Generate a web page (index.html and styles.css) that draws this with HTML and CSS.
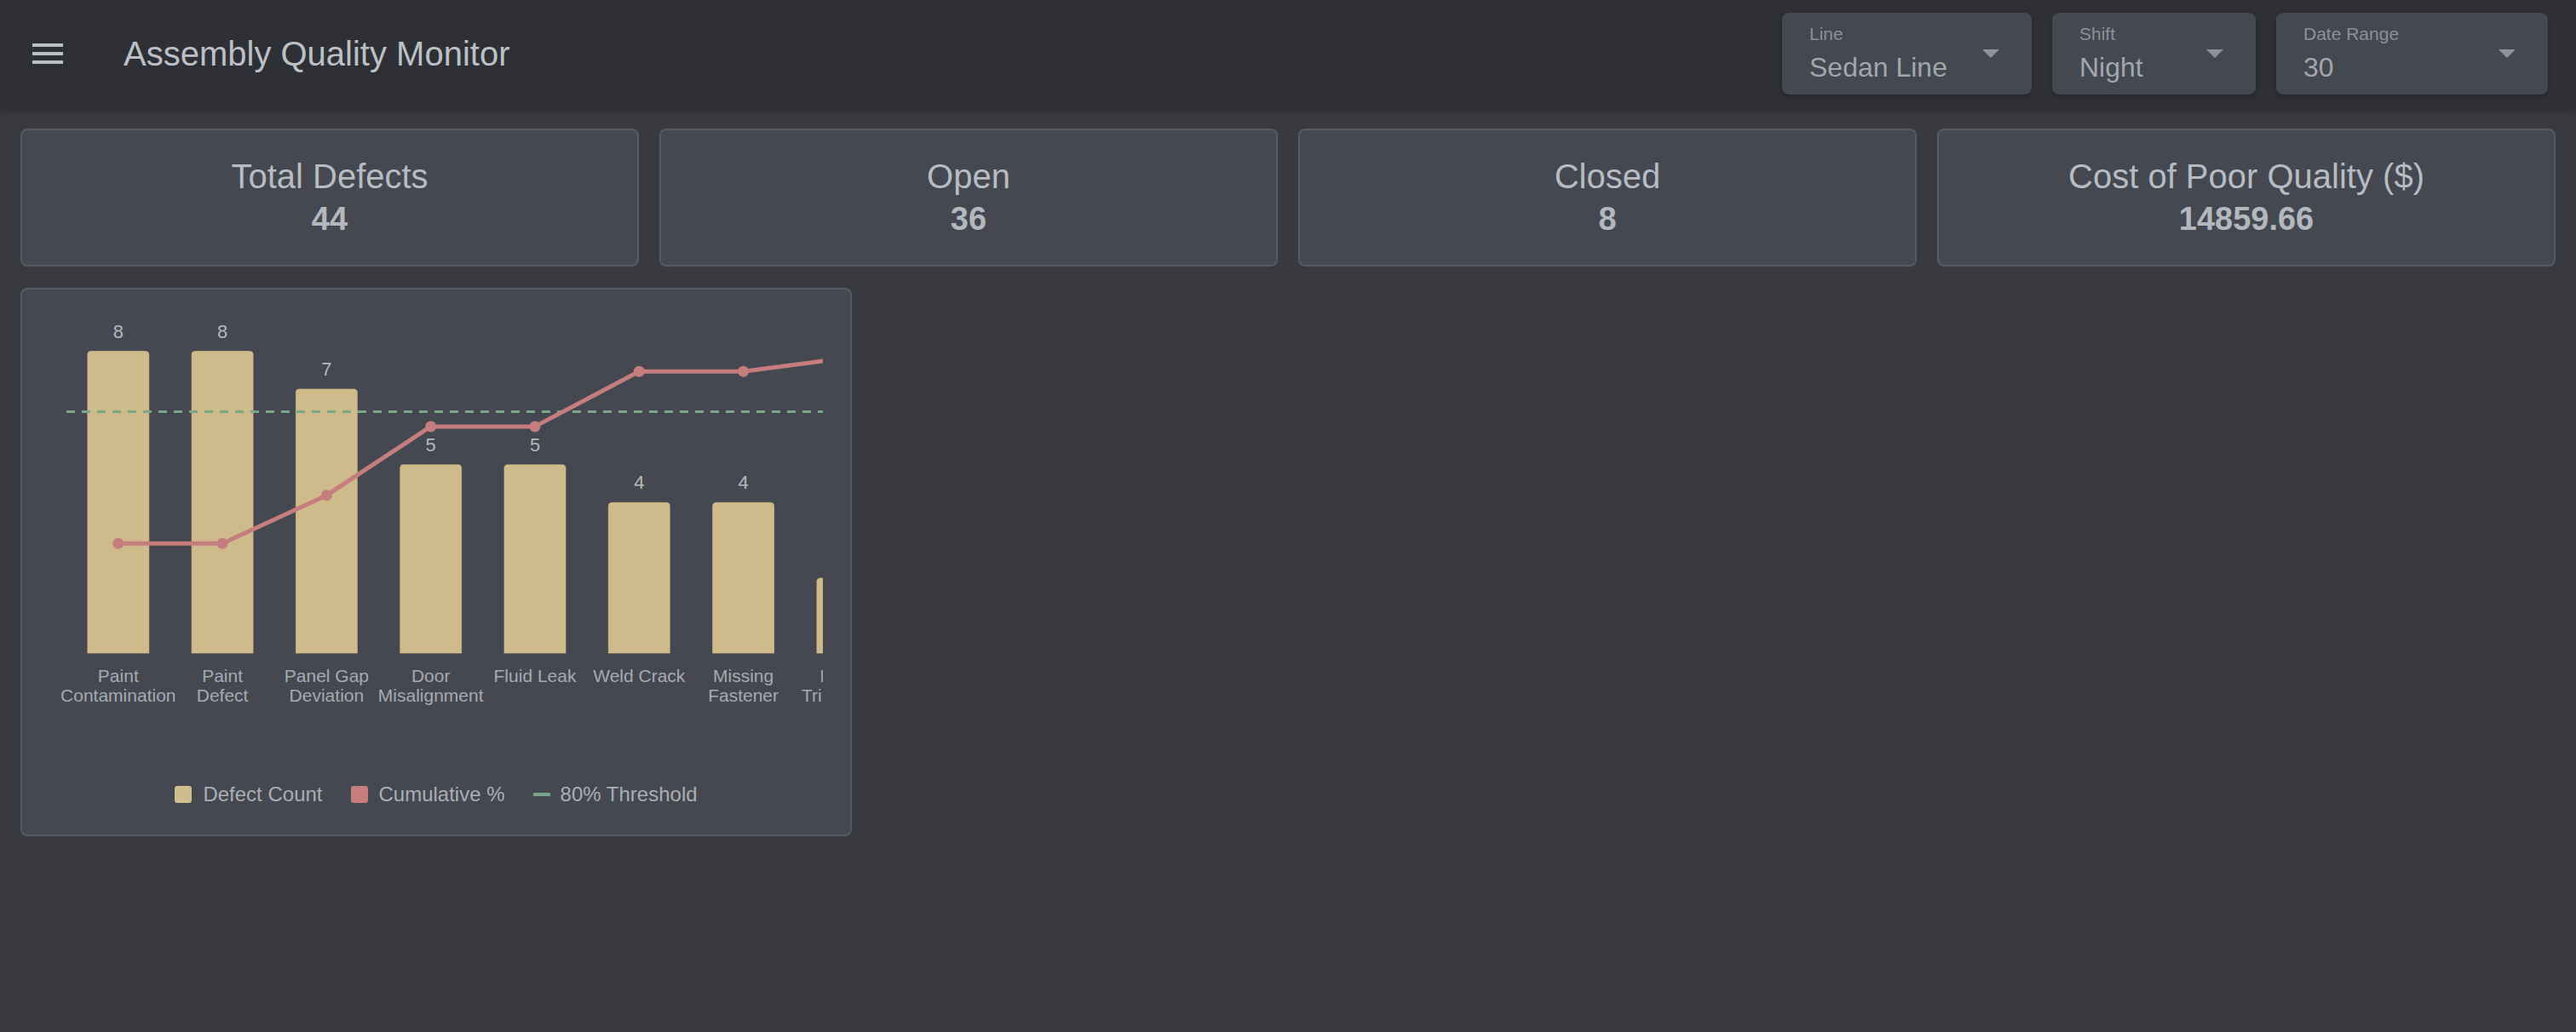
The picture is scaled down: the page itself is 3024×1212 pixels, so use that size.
FILE: index.html
```html
<!DOCTYPE html>
<html lang="en">
<head>
<meta charset="utf-8">
<title>Assembly Quality Monitor</title>
<link rel="stylesheet" href="styles.css">
</head>
<body>
<header class="appbar">
  <svg class="menu-icon" viewBox="0 0 24 24" aria-hidden="true"><path d="M3 18h18v-2H3zm0-5h18v-2H3zm0-7v2h18V6z"/></svg>
  <h1 class="app-title">Assembly Quality Monitor</h1>
  <div class="spacer"></div>
  <div class="filters">
    <div class="select select-line">
      <div class="select-text">
        <div class="select-label">Line</div>
        <div class="select-value">Sedan Line</div>
      </div>
      <svg class="select-arrow" viewBox="7 10 10 5" aria-hidden="true"><path d="M7 10l5 5 5-5z"/></svg>
    </div>
    <div class="select select-shift">
      <div class="select-text">
        <div class="select-label">Shift</div>
        <div class="select-value">Night</div>
      </div>
      <svg class="select-arrow" viewBox="7 10 10 5" aria-hidden="true"><path d="M7 10l5 5 5-5z"/></svg>
    </div>
    <div class="select select-range">
      <div class="select-text">
        <div class="select-label">Date Range</div>
        <div class="select-value">30</div>
      </div>
      <svg class="select-arrow" viewBox="7 10 10 5" aria-hidden="true"><path d="M7 10l5 5 5-5z"/></svg>
    </div>
  </div>
</header>

<main class="content">
  <section class="kpis">
    <div class="card kpi"><div class="kpi-title">Total Defects</div><div class="kpi-value">44</div></div>
    <div class="card kpi"><div class="kpi-title">Open</div><div class="kpi-value">36</div></div>
    <div class="card kpi"><div class="kpi-title">Closed</div><div class="kpi-value">8</div></div>
    <div class="card kpi"><div class="kpi-title">Cost of Poor Quality ($)</div><div class="kpi-value">14859.66</div></div>
  </section>

  <section class="charts">
    <div class="card chart-card">
      <svg class="pareto" width="910" height="549" viewBox="0 0 910 549">
        <g class="bars">
          <path d="M46.3 397.5V47Q46.3 42 51.3 42H114.3Q119.3 42 119.3 47V397.5Z"/>
          <path d="M168.6 397.5V47Q168.6 42 173.6 42H236.6Q241.6 42 241.6 47V397.5Z"/>
          <path d="M290.9 397.5V91.4Q290.9 86.4 295.9 86.4H358.9Q363.9 86.4 363.9 91.4V397.5Z"/>
          <path d="M413.2 397.5V180.3Q413.2 175.3 418.2 175.3H481.2Q486.2 175.3 486.2 180.3V397.5Z"/>
          <path d="M535.5 397.5V180.3Q535.5 175.3 540.5 175.3H603.5Q608.5 175.3 608.5 180.3V397.5Z"/>
          <path d="M657.8 397.5V224.7Q657.8 219.7 662.8 219.7H725.8Q730.8 219.7 730.8 224.7V397.5Z"/>
          <path d="M780.1 397.5V224.7Q780.1 219.7 785.1 219.7H848.1Q853.1 219.7 853.1 224.7V397.5Z"/>
          <path d="M902.4 397.5V313.6Q902.4 308.6 907.4 308.6H970.4Q975.4 308.6 975.4 313.6V397.5Z"/>
        </g>
        <g class="bar-values">
          <text x="82.8" y="26.7">8</text>
          <text x="205.1" y="26.7">8</text>
          <text x="327.4" y="71.1">7</text>
          <text x="449.7" y="160">5</text>
          <text x="572" y="160">5</text>
          <text x="694.3" y="204.4">4</text>
          <text x="816.6" y="204.4">4</text>
        </g>
        <g class="ticks">
          <text x="82.8" y="430.7">Paint</text>
          <text x="82.8" y="454">Contamination</text>
          <text x="205.1" y="430.7">Paint</text>
          <text x="205.1" y="454">Defect</text>
          <text x="327.4" y="430.7">Panel Gap</text>
          <text x="327.4" y="454">Deviation</text>
          <text x="449.7" y="430.7">Door</text>
          <text x="449.7" y="454">Misalignment</text>
          <text x="572" y="430.7">Fluid Leak</text>
          <text x="694.3" y="430.7">Weld Crack</text>
          <text x="816.6" y="430.7">Missing</text>
          <text x="816.6" y="454">Fastener</text>
          <text x="938.9" y="430.7">Interior</text>
          <text x="938.9" y="454">Trim Defect</text>
        </g>
        <line class="threshold" x1="22" y1="113.5" x2="910" y2="113.5"/>
        <polyline class="cum-line" points="82.8,268.2 205.1,268.2 327.4,211.7 449.7,130.9 572,130.9 694.3,66.2 816.6,66.2 938.9,50.1"/>
        <g class="cum-dots">
          <circle cx="82.8" cy="268.2" r="6.5"/>
          <circle cx="205.1" cy="268.2" r="6.5"/>
          <circle cx="327.4" cy="211.7" r="6.5"/>
          <circle cx="449.7" cy="130.9" r="6.5"/>
          <circle cx="572" cy="130.9" r="6.5"/>
          <circle cx="694.3" cy="66.2" r="6.5"/>
          <circle cx="816.6" cy="66.2" r="6.5"/>
        </g>
      </svg>
      <div class="legend">
        <div class="legend-item"><span class="swatch swatch-count"></span><span>Defect Count</span></div>
        <div class="legend-item"><span class="swatch swatch-cum"></span><span>Cumulative %</span></div>
        <div class="legend-item legend-threshold"><span class="swatch-line"></span><span>80% Threshold</span></div>
      </div>
    </div>
  </section>
</main>
</body>
</html>
```
FILE: styles.css
```css
html, body {
  margin: 0;
  padding: 0;
}
body {
  background: #383a40;
  font-family: "Liberation Sans", Arial, Helvetica, sans-serif;
  color: #b8bcc3;
  min-height: 1212px;
}

/* App bar */
.appbar {
  height: 126px;
  box-sizing: border-box;
  display: flex;
  align-items: center;
  padding: 0 33px 0 32px;
  background: #2f3035;
  box-shadow: 0 4px 8px rgba(0, 0, 0, 0.28);
  position: relative;
  z-index: 1;
}
.menu-icon {
  width: 48px;
  height: 48px;
  fill: #babec5;
  flex: none;
}
.app-title {
  margin: 0 0 0 65px;
  font-size: 40px;
  line-height: 48px;
  font-weight: 400;
  color: #bcc0c6;
}
.spacer { flex: 1; }
.filters {
  display: flex;
  gap: 24px;
}
.select {
  height: 96px;
  box-sizing: border-box;
  display: flex;
  align-items: center;
  padding: 0 38px 0 32px;
  background: #444851;
  border-radius: 8px;
  box-shadow: 0 2px 4px rgba(0, 0, 0, 0.25);
}
.select-line { width: 293px; }
.select-shift { width: 239px; }
.select-range { width: 319px; }
.select-text {
  flex: 1;
  padding-top: 1px;
}
.select-label {
  font-size: 21px;
  line-height: 24px;
  color: #8d9199;
}
.select-value {
  margin-top: 7px;
  font-size: 32px;
  line-height: 40px;
  color: #a2a6ad;
}
.select-arrow {
  width: 20px;
  height: 10px;
  fill: #8e9299;
  flex: none;
}

/* Content */
.content {
  padding: 25px 24px 24px;
}
.card {
  background: #454851;
  border: 2px solid #575b64;
  border-radius: 8px;
  box-sizing: border-box;
}
.kpis {
  display: grid;
  grid-template-columns: repeat(4, 1fr);
  gap: 24px;
  margin-bottom: 25px;
}
.kpi {
  padding: 29px 0;
  text-align: center;
}
.kpi-title {
  font-size: 40px;
  line-height: 50px;
  color: #b7bbc2;
}
.kpi-value {
  font-size: 38px;
  line-height: 50px;
  font-weight: 700;
  color: #b3b7be;
}
.charts {
  display: grid;
  grid-template-columns: repeat(3, 1fr);
  gap: 24px;
}
.chart-card {
  padding: 30px 30px 33px;
}
.pareto {
  display: block;
  overflow: hidden;
}
.bars path {
  fill: #ceba8b;
  stroke: rgba(60, 55, 40, 0.25);
  stroke-width: 1;
}
.bar-values text {
  font-size: 22px;
  fill: #b4b8bf;
  text-anchor: middle;
}
.ticks text {
  font-size: 21px;
  fill: #a6aab2;
  text-anchor: middle;
}
.threshold {
  stroke: #7aa68a;
  stroke-width: 3;
  stroke-dasharray: 10 8;
}
.cum-line {
  fill: none;
  stroke: #c67d7e;
  stroke-width: 5;
  stroke-linejoin: round;
}
.cum-dots circle {
  fill: #c67d7e;
}
.legend {
  display: flex;
  justify-content: center;
  gap: 33px;
  font-size: 24px;
  line-height: 28px;
  color: #aaaeb5;
}
.legend-item {
  display: flex;
  align-items: center;
  gap: 13px;
}
.legend-threshold { gap: 12px; }
.swatch {
  width: 20px;
  height: 20px;
  border-radius: 3px;
  flex: none;
}
.swatch-count { background: #d0bd8d; }
.swatch-cum { background: #c67d7e; }
.swatch-line {
  width: 20px;
  height: 4px;
  border-radius: 1px;
  background: #7aa68a;
  flex: none;
}
```
